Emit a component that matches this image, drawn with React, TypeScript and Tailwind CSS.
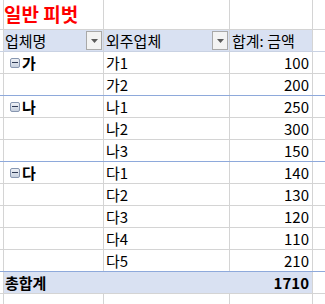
import type React from "react";

type Line = "gray" | "blue";

type PivotRow = {
  group?: string;
  item: string;
  amount: number;
  bottom: Line;
};

const rows: PivotRow[] = [
  { group: "가", item: "가1", amount: 100, bottom: "gray" },
  { item: "가2", amount: 200, bottom: "blue" },
  { group: "나", item: "나1", amount: 250, bottom: "gray" },
  { item: "나2", amount: 300, bottom: "gray" },
  { item: "나3", amount: 150, bottom: "blue" },
  { group: "다", item: "다1", amount: 140, bottom: "gray" },
  { item: "다2", amount: 130, bottom: "gray" },
  { item: "다3", amount: 120, bottom: "gray" },
  { item: "다4", amount: 110, bottom: "gray" },
  { item: "다5", amount: 210, bottom: "blue" },
];

const FilterButton: React.FC = () => (
  <div className="flex h-[19px] w-[16px] items-center justify-center border border-[#a9a9a9] bg-[#f3f3f3]">
    <svg aria-hidden="true" className="h-[4px] w-[7px]" viewBox="0 0 7 4">
      <title>Filter</title>
      <path d="M0 0h7L3.5 4z" fill="#5a5a5a" />
    </svg>
  </div>
);

const CollapseBox: React.FC = () => (
  <div className="flex h-[10px] w-[10px] items-center justify-center rounded-[2px] border border-[#8796b0] bg-gradient-to-b from-[#eef1f6] to-[#c7d0de]">
    <div className="h-[1.5px] w-[6px] bg-[#2f3b55]" />
  </div>
);

const App: React.FC = () => {
  const total = rows.reduce((sum, r) => sum + r.amount, 0);

  return (
    <div
      className="h-[304px] w-[325px] overflow-hidden bg-white text-[15px] text-black"
      style={{ fontFamily: '"Noto Sans CJK KR", "Noto Sans", sans-serif' }}
    >
      {/* title row */}
      <div className="flex h-[30px] border-b border-[#d4d4d4]">
        <div className="w-[4px] border-r border-[#d4d4d4]" />
        <div className="relative w-[100px] border-r border-[#d4d4d4]">
          <span className="absolute left-0 top-[1px] whitespace-nowrap font-bold text-[19px] text-[#ff0000] leading-[26px]">
            일반 피벗
          </span>
        </div>
        <div className="w-[126px] border-r border-[#d4d4d4]" />
        <div className="w-[83px] border-r border-[#d4d4d4]" />
        <div className="flex-1" />
      </div>

      {/* header row */}
      <div className="flex h-[22px] border-b border-[#c9d2e3]">
        <div className="w-[4px] border-r border-[#d4d4d4]" />
        <div className="flex w-[100px] items-center justify-between border-r border-[#d4d4d4] bg-[#d9e1f2] pl-[1px] pr-[1px]">
          <span className="leading-none">업체명</span>
          <FilterButton />
        </div>
        <div className="flex w-[126px] items-center justify-between border-r border-[#d4d4d4] bg-[#d9e1f2] pl-[2px] pr-[1px]">
          <span className="leading-none">외주업체</span>
          <FilterButton />
        </div>
        <div className="flex w-[83px] items-center border-r border-[#d4d4d4] bg-[#d9e1f2] pl-[2px]">
          <span className="whitespace-nowrap leading-none">합계: 금액</span>
        </div>
        <div className="flex-1" />
      </div>

      {rows.map((r) => {
        const line = r.bottom === "blue" ? "border-[#8ea9db]" : "border-[#d4d4d4]";
        return (
          <div className={`flex h-[22px] border-b ${line}`} key={r.item}>
            <div className="w-[4px] border-r border-[#d4d4d4]" />
            <div className="flex w-[100px] items-center border-r border-[#d4d4d4] pl-[6px]">
              {r.group && (
                <>
                  <CollapseBox />
                  <span className="ml-[2px] font-bold leading-none">{r.group}</span>
                </>
              )}
            </div>
            <div className="flex w-[126px] items-center border-r border-[#d4d4d4] pl-[2px]">
              <span className="leading-none">{r.item}</span>
            </div>
            <div className="flex w-[83px] items-center justify-end border-r border-[#d4d4d4] pr-[3px]">
              <span className="leading-none">{r.amount}</span>
            </div>
            <div className="flex-1" />
          </div>
        );
      })}

      {/* grand total */}
      <div className="flex h-[22px] border-b border-[#d4d4d4]">
        <div className="w-[4px] border-r border-[#d4d4d4]" />
        <div className="flex w-[309px] items-center justify-between border-r border-[#d4d4d4] bg-[#d9e1f2] pl-[1px] pr-[3px] font-bold">
          <span className="leading-none">총합계</span>
          <span className="leading-none">{total}</span>
        </div>
        <div className="flex-1" />
      </div>

      <div className="flex h-[22px]">
        <div className="w-[4px] border-r border-[#d4d4d4]" />
        <div className="w-[100px] border-r border-[#d4d4d4]" />
        <div className="w-[126px] border-r border-[#d4d4d4]" />
        <div className="w-[83px] border-r border-[#d4d4d4]" />
        <div className="flex-1" />
      </div>
    </div>
  );
};

export default App;
